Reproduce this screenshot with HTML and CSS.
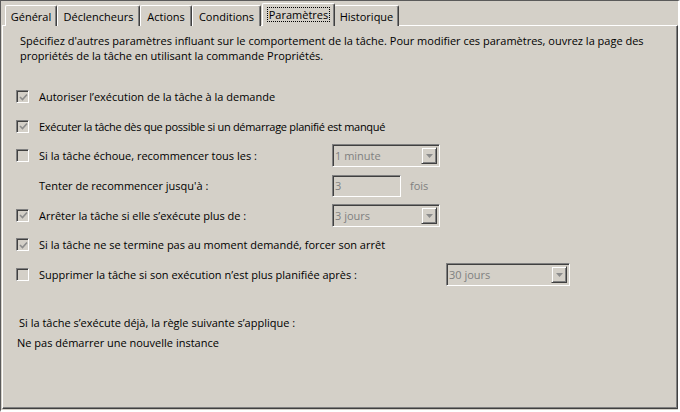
FILE: index.html
```html
<!DOCTYPE html>
<html lang="fr">
<head>
<meta charset="utf-8">
<title>Paramètres</title>
<link rel="stylesheet" href="styles.css">
</head>
<body>
<div class="window">
  <div class="tabs">
    <div class="tab w-general">Général</div>
    <div class="tab w-decl">Déclencheurs</div>
    <div class="tab w-actions">Actions</div>
    <div class="tab w-cond">Conditions</div>
    <div class="tab tab-active w-param"><span class="focus">Paramètres</span></div>
    <div class="tab w-hist">Historique</div>
  </div>
  <div class="panel">
    <p class="intro">Spécifiez d'autres paramètres influant sur le comportement de la tâche. Pour modifier ces paramètres, ouvrez la page des propriétés de la tâche en utilisant la commande Propriétés.</p>
    <div class="rows">
      <div class="row">
        <span class="check checked"><svg viewBox="0 0 9 9" width="9" height="9"><path d="M1 4 L3.5 6.5 L8 1.5" fill="none" stroke="#8c8c8c" stroke-width="1.6"/></svg></span>
        <span class="label">Autoriser l’exécution de la tâche à la demande</span>
      </div>
      <div class="row">
        <span class="check checked"><svg viewBox="0 0 9 9" width="9" height="9"><path d="M1 4 L3.5 6.5 L8 1.5" fill="none" stroke="#8c8c8c" stroke-width="1.6"/></svg></span>
        <span class="label tight">Exécuter la tâche dès que possible si un démarrage planifié est manqué</span>
      </div>
      <div class="row">
        <span class="check"></span>
        <span class="label fixed">Si la tâche échoue, recommencer tous les :</span>
        <span class="combo"><span class="combo-text">1 minute</span><span class="combo-btn"><svg viewBox="0 0 7 4" width="7" height="4"><path d="M0 0 H7 L3.5 4 Z" fill="#8c8c8c"/></svg></span></span>
      </div>
      <div class="row">
        <span class="check-space"></span>
        <span class="label fixed">Tenter de recommencer jusqu'à :</span>
        <span class="textbox">3</span>
        <span class="unit">fois</span>
      </div>
      <div class="row">
        <span class="check checked"><svg viewBox="0 0 9 9" width="9" height="9"><path d="M1 4 L3.5 6.5 L8 1.5" fill="none" stroke="#8c8c8c" stroke-width="1.6"/></svg></span>
        <span class="label fixed">Arrêter la tâche si elle s’exécute plus de :</span>
        <span class="combo"><span class="combo-text">3 jours</span><span class="combo-btn"><svg viewBox="0 0 7 4" width="7" height="4"><path d="M0 0 H7 L3.5 4 Z" fill="#8c8c8c"/></svg></span></span>
      </div>
      <div class="row">
        <span class="check checked"><svg viewBox="0 0 9 9" width="9" height="9"><path d="M1 4 L3.5 6.5 L8 1.5" fill="none" stroke="#8c8c8c" stroke-width="1.6"/></svg></span>
        <span class="label">Si la tâche ne se termine pas au moment demandé, forcer son arrêt</span>
      </div>
      <div class="row">
        <span class="check"></span>
        <span class="label fixed-wide">Supprimer la tâche si son exécution n’est plus planifiée après :</span>
        <span class="combo combo-wide"><span class="combo-text">30 jours</span><span class="combo-btn"><svg viewBox="0 0 7 4" width="7" height="4"><path d="M0 0 H7 L3.5 4 Z" fill="#8c8c8c"/></svg></span></span>
      </div>
    </div>
    <p class="rule">Si la tâche s’exécute déjà, la règle suivante s’applique :</p>
    <p class="rule-value">Ne pas démarrer une nouvelle instance</p>
  </div>
</div>
</body>
</html>
```
FILE: styles.css
```css
* { box-sizing: border-box; }
html, body {
  margin: 0;
  padding: 0;
  background: #d4d0c8;
}
body {
  font-family: "Open Sans", "Liberation Sans", sans-serif;
  font-size: 11px;
  color: #000;
}
.window {
  width: 680px;
  height: 412px;
  border-top: 1px solid #5a5a5a;
  border-left: 1px solid #5a5a5a;
  border-right: 2px solid #ffffff;
  border-bottom: 2px solid #ffffff;
  padding: 3px 0 1px 1px;
  display: flex;
  flex-direction: column;
}
.tabs {
  display: flex;
  align-items: flex-end;
  height: 22px;
  padding-left: 3px;
  position: relative;
  z-index: 2;
  margin-bottom: -1px;
}
.tab {
  height: 21px;
  border-top: 1px solid #fff;
  border-left: 1px solid #fff;
  border-right: 1px solid #404040;
  box-shadow: inset -1px 0 0 #808080;
  border-top-left-radius: 2px;
  border-top-right-radius: 2px;
  display: flex;
  align-items: center;
  justify-content: center;
  white-space: nowrap;
  background: #d4d0c8;
  line-height: 14px;
  padding-top: 1px;
}
.w-general { width: 52px; }
.w-decl { width: 83px; }
.w-actions { width: 52px; }
.w-cond { width: 69px; }
.w-param { width: 73px; }
.w-hist { width: 65px; }
.tab-active {
  height: 23px;
  margin-left: 1px;
  margin-right: -1px;
  padding-top: 0;
  padding-bottom: 2px;
  z-index: 3;
}
.focus {
  outline: 1px dotted #000;
  outline-offset: 0;
  padding: 0 1px;
  line-height: 13px;
}
.panel {
  flex: 1;
  border-top: 1px solid #fff;
  border-left: 1px solid #fff;
  border-right: 1px solid #404040;
  border-bottom: 1px solid #404040;
  box-shadow: inset -1px -1px 0 #808080;
  padding: 7px 0 0 13px;
  position: relative;
  z-index: 1;
}
.intro {
  margin: 0 0 0 4px;
  line-height: 15px;
  width: 650px;
}
.rows {
  display: flex;
  flex-direction: column;
  margin-top: 19px;
}
.row {
  height: 29.6px;
  display: flex;
  align-items: center;
}
.check {
  width: 13px;
  height: 13px;
  flex: none;
  border-top: 1px solid #808080;
  border-left: 1px solid #808080;
  border-right: 1px solid #fff;
  border-bottom: 1px solid #fff;
  box-shadow: inset 1px 1px 0 #404040, inset -1px -1px 0 #d4d0c8;
  display: flex;
  align-items: center;
  justify-content: center;
  margin-right: 10px;
  padding: 1px 0 0 1px;
}
.check-space {
  width: 13px;
  flex: none;
  margin-right: 10px;
}
.label {
  white-space: nowrap;
}
.label.tight { letter-spacing: -0.3px; }
.label.fixed { width: 293px; flex: none; }
.label.fixed-wide { width: 407px; flex: none; }
.combo {
  width: 108px;
  height: 23px;
  flex: none;
  border-top: 1px solid #808080;
  border-left: 1px solid #808080;
  border-right: 1px solid #fff;
  border-bottom: 1px solid #fff;
  box-shadow: inset 1px 1px 0 #404040, inset -1px -1px 0 #d4d0c8;
  display: flex;
  align-items: center;
  justify-content: space-between;
  padding: 2px;
  color: #808080;
}
.combo-wide { width: 124px; }
.combo-btn {
  width: 16px;
  height: 17px;
  border-top: 1px solid #d4d0c8;
  border-left: 1px solid #d4d0c8;
  border-right: 1px solid #404040;
  border-bottom: 1px solid #404040;
  box-shadow: inset 1px 1px 0 #fff, inset -1px -1px 0 #808080;
  display: flex;
  align-items: center;
  justify-content: center;
  padding-top: 1px;
}
.textbox {
  width: 69px;
  height: 22px;
  flex: none;
  border-top: 1px solid #808080;
  border-left: 1px solid #808080;
  border-right: 1px solid #fff;
  border-bottom: 1px solid #fff;
  box-shadow: inset 1px 1px 0 #404040, inset -1px -1px 0 #d4d0c8;
  color: #808080;
  display: flex;
  align-items: center;
  padding-left: 2px;
}
.unit {
  margin-left: 9px;
  color: #808080;
}
.rule {
  margin: 26px 0 0 3px;
  line-height: 15px;
}
.rule-value {
  margin: 5px 0 0 1px;
  line-height: 15px;
}
```
